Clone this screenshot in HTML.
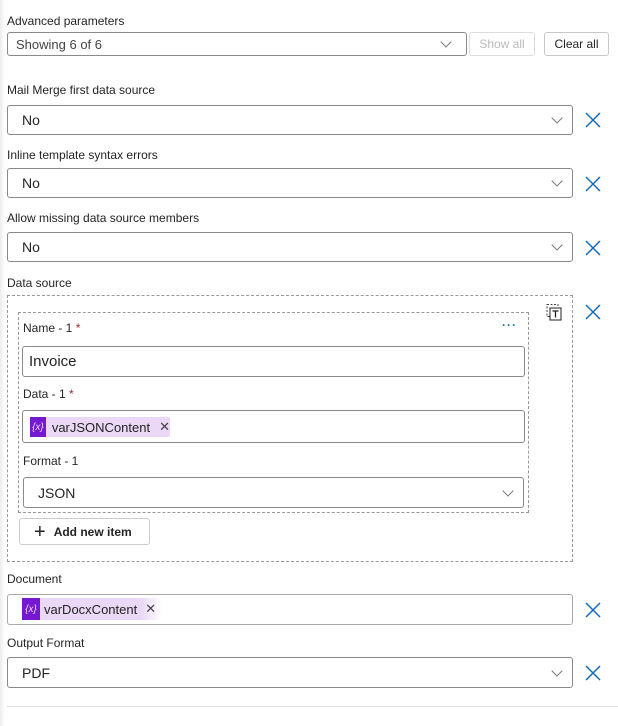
<!DOCTYPE html>
<html><head><style>
*{box-sizing:border-box;margin:0;padding:0}
body{width:618px;height:726px;background:#fff;font-family:"Liberation Sans",sans-serif;color:#242424;position:relative;overflow:hidden}
.abs{position:absolute}
.lbl{position:absolute;font-size:12px;color:#242424}
.sel{position:absolute;border:1px solid #8a8a8a;border-radius:3px;background:#fff;font-size:14px;display:flex;align-items:center;padding-left:14px}
.chev{position:absolute;right:11px;top:50%;width:8px;height:8px;border-right:1px solid #777;border-bottom:1px solid #777;transform:translateY(-75%) rotate(45deg)}
.x{position:absolute;width:18px;height:18px}
.chip{position:absolute;height:20px;background:#ead8f6;display:flex;align-items:center;font-size:13px;border-radius:2px}
.chip .ic{width:18px;height:20px;background:#7519d0;color:#e6d0ff;font-size:10px;display:flex;align-items:center;justify-content:center;font-style:italic}
.star{color:#a4262c}
</style></head><body>
<div class="abs" style="left:0;top:0;width:5px;height:726px;background:linear-gradient(90deg,#ececec,#fff)"></div>
<div class="lbl" style="left:7px;top:14px">Advanced parameters</div>
<div class="sel" style="left:7px;top:32px;width:460px;height:24px;font-size:13px;padding-left:8px;color:#444">Showing 6 of 6<span class="chev" style="right:16px"></span></div>
<div class="abs" style="left:469px;top:32px;width:66px;height:24px;border:1px solid #ddd;border-radius:3px;font-size:12px;color:#bbb;display:flex;align-items:center;justify-content:center">Show all</div>
<div class="abs" style="left:544px;top:32px;width:65px;height:24px;border:1px solid #c8c8c8;border-radius:3px;font-size:12px;display:flex;align-items:center;justify-content:center">Clear all</div>

<div class="lbl" style="left:7px;top:83px">Mail Merge first data source</div>
<div class="sel" style="left:7px;top:105px;width:566px;height:30px">No<span class="chev"></span></div>
<svg class="x" style="left:584px;top:111px" viewBox="0 0 18 18"><path d="M2 2L16 16M16 2L2 16" stroke="#0f6cbd" stroke-width="1.5"/></svg>

<div class="lbl" style="left:7px;top:148px">Inline template syntax errors</div>
<div class="sel" style="left:7px;top:168px;width:566px;height:30px">No<span class="chev"></span></div>
<svg class="x" style="left:584px;top:175px" viewBox="0 0 18 18"><path d="M2 2L16 16M16 2L2 16" stroke="#0f6cbd" stroke-width="1.5"/></svg>

<div class="lbl" style="left:7px;top:211px">Allow missing data source members</div>
<div class="sel" style="left:7px;top:232px;width:566px;height:30px">No<span class="chev"></span></div>
<svg class="x" style="left:584px;top:239px" viewBox="0 0 18 18"><path d="M2 2L16 16M16 2L2 16" stroke="#0f6cbd" stroke-width="1.5"/></svg>

<div class="lbl" style="left:7px;top:276px">Data source</div>
<div class="abs" style="left:7px;top:295px;width:566px;height:267px;border:1px dashed #999"></div>
<svg class="x" style="left:584px;top:303px" viewBox="0 0 18 18"><path d="M2 2L16 16M16 2L2 16" stroke="#0f6cbd" stroke-width="1.5"/></svg>
<svg class="abs" style="left:545px;top:303px" width="18" height="18" viewBox="0 0 18 18"><rect x="2" y="1.5" width="11" height="12" fill="none" stroke="#444" stroke-dasharray="2 1.5"/><rect x="5" y="5" width="11" height="12" fill="#fff" stroke="#222"/><path d="M7.5 8h6M10.5 8v6.5" stroke="#222" stroke-width="1.3"/></svg>
<div class="abs" style="left:18px;top:312px;width:511px;height:201px;border:1px dashed #999"></div>
<div class="abs" style="left:502px;top:318px;font-size:12px;color:#1b7a8a;letter-spacing:1px;font-weight:bold">···</div>
<div class="lbl" style="left:23px;top:321px">Name - 1 <span class="star">*</span></div>
<div class="sel" style="left:22px;top:346px;width:503px;height:31px;font-size:15px;padding-left:6px">Invoice</div>
<div class="lbl" style="left:23px;top:387px">Data - 1 <span class="star">*</span></div>
<div class="sel" style="left:22px;top:410px;width:503px;height:33px;padding-left:0"></div>
<div class="chip" style="left:30px;top:417px;width:140px"><span class="ic">{x}</span><span style="margin-left:6px">varJSONContent</span><span style="margin-left:9px;color:#444">✕</span></div>
<div class="lbl" style="left:23px;top:454px">Format - 1</div>
<div class="sel" style="left:23px;top:477px;width:501px;height:31px">JSON<span class="chev"></span></div>
<div class="abs" style="left:19px;top:518px;width:131px;height:27px;border:1px solid #ccc;border-radius:3px;font-size:12px;font-weight:bold;display:flex;align-items:center;padding-left:14px"><span style="font-size:20px;font-weight:normal;margin-right:8px;line-height:1">+</span>Add new item</div>

<div class="lbl" style="left:7px;top:572px">Document</div>
<div class="sel" style="left:7px;top:594px;width:566px;height:31px;border-color:#aaa"></div>
<div class="chip" style="left:22px;top:598px;width:140px;height:22px;background:linear-gradient(90deg,#ead8f6 85%,#fff)"><span class="ic" style="height:22px">{x}</span><span style="margin-left:4px">varDocxContent</span><span style="margin-left:8px;color:#444">✕</span></div>
<svg class="x" style="left:584px;top:601px" viewBox="0 0 18 18"><path d="M2 2L16 16M16 2L2 16" stroke="#0f6cbd" stroke-width="1.5"/></svg>

<div class="lbl" style="left:7px;top:636px">Output Format</div>
<div class="sel" style="left:7px;top:657px;width:566px;height:31px">PDF<span class="chev"></span></div>
<svg class="x" style="left:584px;top:664px" viewBox="0 0 18 18"><path d="M2 2L16 16M16 2L2 16" stroke="#0f6cbd" stroke-width="1.5"/></svg>
<div class="abs" style="left:7px;top:706px;width:611px;height:1px;background:#e0e0e0"></div>
</body></html>
